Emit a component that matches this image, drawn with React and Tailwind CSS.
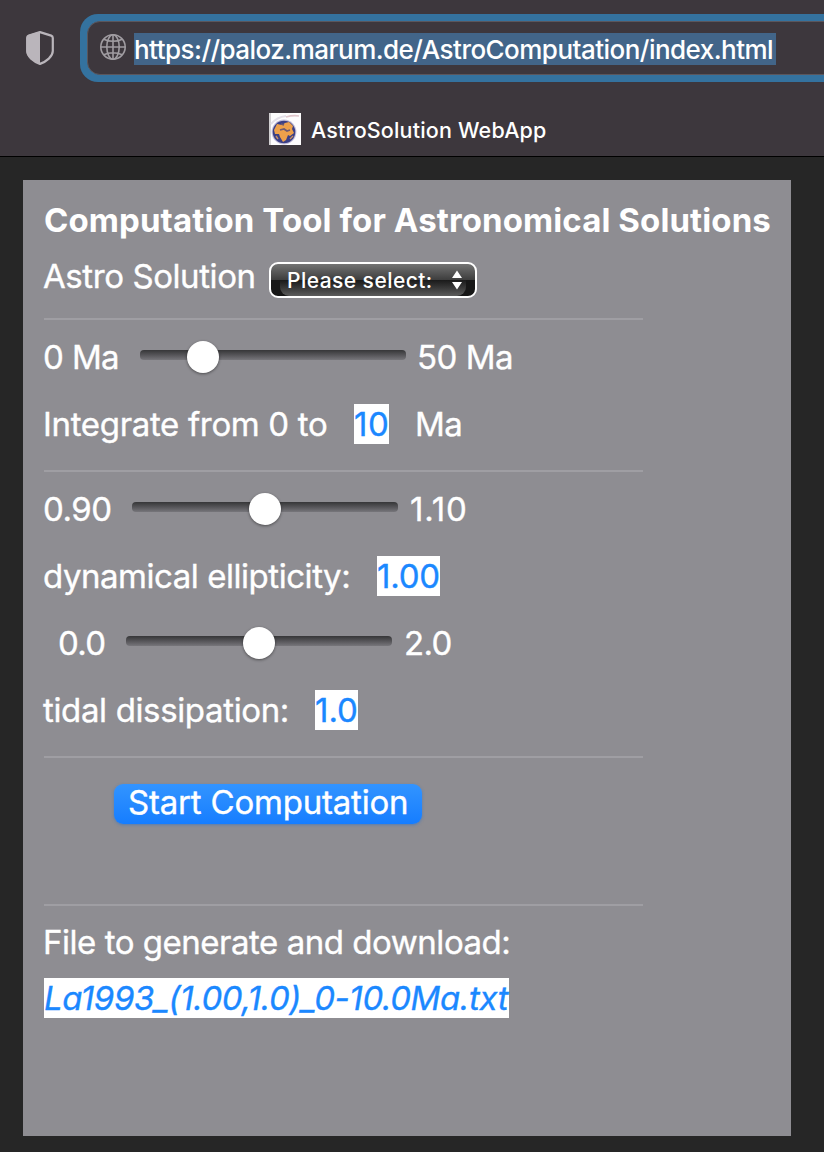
function Shield() {
  return (
    <svg className="h-[34px] w-7 shrink-0" viewBox="0 0 28 34" fill="none">
      <path
        d="M14 1.1 L25.2 4.6 Q26.8 5.2 26.8 7 V20 C26.8 25.5 20.5 30.4 14 32.9 C7.5 30.4 1.2 25.5 1.2 20 V7 Q1.2 5.2 2.8 4.6 Z"
        stroke="#bab5bb"
        strokeWidth="2.2"
        strokeLinejoin="round"
      />
      <path d="M14 0.5 V33.2 C6.5 30.5 0.4 25.5 0.4 20 V7 Q0.4 4.8 2.4 4.1 Z" fill="#bab5bb" />
    </svg>
  );
}

function Globe() {
  return (
    <svg className="mt-px size-[26px] shrink-0" viewBox="0 0 26 26" fill="none" stroke="#a09ca1" strokeWidth="1.6">
      <circle cx="13" cy="13" r="12.2" />
      <ellipse cx="13" cy="13" rx="6.2" ry="12.2" />
      <path d="M13 0.8 V25.2 M0.8 13 H25.2 M3.7 5.2 Q13 9.4 22.3 5.2 M3.7 20.8 Q13 16.6 22.3 20.8" />
    </svg>
  );
}

function Favicon() {
  return (
    <svg className="size-8 shrink-0" viewBox="0 0 32 32">
      <rect width="32" height="32" fill="#fdfcfd" />
      <rect width="2" height="32" fill="#d2d0d2" />
      <path d="M2 11 Q8 4 17 3" stroke="#e3dfe8" strokeWidth="2" fill="none" />
      <path d="M17 4 Q24 2 30 3" stroke="#dfc5cb" strokeWidth="1.6" fill="none" />
      <circle cx="15" cy="19" r="12.4" fill="#c5c0da" />
      <circle cx="15" cy="19" r="11.3" fill="#3a3f86" />
      <path d="M5 17 L8 11 L13 12 L16 10 L20 9 L24 13 L23 16 L25 20 L21 23 L19 22 L17 27 L14 29 L11 24 L10 21 L6 21 Z" fill="#eda04b" />
      <path d="M11 17 L15 16 L18 18 L21 17 M12 11 L15 12" stroke="#705a70" strokeWidth="1.8" fill="none" />
      <path d="M7 23 L9 26 M21 26 L24 23" stroke="#c98f60" strokeWidth="1.4" />
    </svg>
  );
}

function Slider({ position }) {
  return (
    <div className="flex h-8 w-[266px] shrink-0 items-center">
      <div className="relative mb-1 h-2.5 w-full rounded-[4px] bg-linear-to-b from-[#363638] to-[#77767b]">
        <div
          className="absolute -top-[9px] size-8 rounded-full bg-white shadow-[0_1px_3px_rgba(0,0,0,0.45)]"
          style={{ left: position }}
        />
      </div>
    </div>
  );
}

function Rule({ className }) {
  return <div className={`h-0.5 w-[599px] bg-[#9f9ea3] ${className}`} />;
}

function Row({ className = "", children }) {
  return (
    <div className={`flex h-10 items-center [-webkit-text-stroke:0.35px] ${className}`}>{children}</div>
  );
}

function Value({ className, children }) {
  return <span className={`h-10 shrink-0 bg-white leading-10 text-[#1b88ff] ${className}`}>{children}</span>;
}

export default function App() {
  return (
    <div className="h-[1152px] w-[824px] overflow-hidden bg-[#262626] font-['Inter',sans-serif] whitespace-nowrap text-white">
      <header className="h-[157px] border-b border-black bg-[#3d373d]">
        <div className="flex pt-3.5">
          <div className="flex w-20 shrink-0 pt-[17px] pl-[26px]">
            <Shield />
          </div>
          <div className="h-[68px] w-[760px] shrink-0 rounded-l-[18px] bg-[#34729f] p-[7px]">
            <div className="flex h-full items-start rounded-l-[13px] border border-[#5b565c] bg-[#3d373d] pt-[11px] pl-3">
              <Globe />
              <span className="ml-2 h-8 w-[642px] bg-[#426589] text-[26px] leading-[33px] font-medium tracking-[-0.53px]">
                https://paloz.marum.de/AstroComputation/index.html
              </span>
            </div>
          </div>
        </div>
        <div className="mt-[31px] flex h-8 items-center pl-[269px]">
          <Favicon />
          <span className="ml-2.5 pt-0.5 text-[21.5px] font-medium tracking-[0.17px]">AstroSolution WebApp</span>
        </div>
      </header>

      <main className="mt-[23px] ml-[23px] h-[956px] w-[768px] bg-[#8e8d92] pt-5 pl-[21px] text-[33px] leading-10">
        <h1 className="h-10 font-bold tracking-[0.1px]">Computation Tool for Astronomical Solutions</h1>

        <Row className="mt-4">
          <span className="-ml-px w-[226px] tracking-[-0.42px]">Astro Solution</span>
          <div className="mt-2 flex h-9 w-[208px] overflow-hidden rounded-[9px] border-2 border-white bg-linear-to-b from-[#747474] from-0% via-[#3d3d3d] via-50% to-[#171717] to-50% [-webkit-text-stroke:0]">
            <div className="mx-[9px] flex h-8 flex-1 items-center rounded-b-[9px] bg-linear-to-b from-transparent from-50% via-[#1a1a1a] via-50% to-[#5c5c5c]">
              <span className="ml-[7px] pt-0.5 text-[21px] leading-8 font-medium tracking-[0.45px]">Please select:</span>
              <svg className="mr-[3px] ml-auto h-5 w-3" viewBox="0 0 12 20" fill="white">
                <path d="M6 0.5 L11 8 H1 Z M6 19.5 L1 12 H11 Z" />
              </svg>
            </div>
          </div>
        </Row>

        <Rule className="mt-[22px]" />

        <Row className="mt-[17px]">
          <span className="-ml-px w-[97px] tracking-[-0.6px]">0 Ma</span>
          <Slider position="47px" />
          <span className="ml-[11px] tracking-[-0.5px]">50 Ma</span>
        </Row>
        <Row className="mt-[27px]">
          <span className="-ml-px w-[311px] tracking-[-0.33px]">Integrate from 0 to</span>
          <Value className="w-[35px] tracking-[0.5px]">10</Value>
          <span className="ml-[26px] tracking-[-0.5px]">Ma</span>
        </Row>

        <Rule className="mt-[26px]" />

        <Row className="mt-[17px]">
          <span className="-ml-px w-[89px] tracking-[-0.5px]">0.90</span>
          <Slider position="117px" />
          <span className="ml-3 tracking-[0.8px]">1.10</span>
        </Row>
        <Row className="mt-[27px]">
          <span className="-ml-px w-[334px] tracking-[-0.46px]">dynamical ellipticity:</span>
          <Value className="w-[63px] tracking-[-0.2px]">1.00</Value>
        </Row>
        <Row className="mt-[27px]">
          <span className="w-[82px] pl-3.5 tracking-[-0.7px]">0.0</span>
          <Slider position="117px" />
          <span className="ml-3 tracking-[-0.7px]">2.0</span>
        </Row>
        <Row className="mt-[27px]">
          <span className="-ml-px w-[272px] tracking-[-0.36px]">tidal dissipation:</span>
          <Value className="w-[43px]">1.0</Value>
        </Row>

        <Rule className="mt-[26px]" />

        <button className="mt-[26px] ml-[70px] flex h-10 w-[308px] items-start rounded-[9px] bg-linear-to-b from-[#3294ff] to-[#157dff] pl-3.5 leading-9 tracking-[-0.2px] shadow-[0_1px_3px_rgba(30,110,210,0.5)] [-webkit-text-stroke:0.35px]">
          Start Computation
        </button>

        <Rule className="mt-20" />

        <Row className="mt-4">
          <span className="-ml-px tracking-[-0.47px]">File to generate and download:</span>
        </Row>
        <Row className="mt-4">
          <Value className="w-[465px] italic tracking-[-0.4px]">La1993_(1.00,1.0)_0-10.0Ma.txt</Value>
        </Row>
      </main>
    </div>
  );
}
